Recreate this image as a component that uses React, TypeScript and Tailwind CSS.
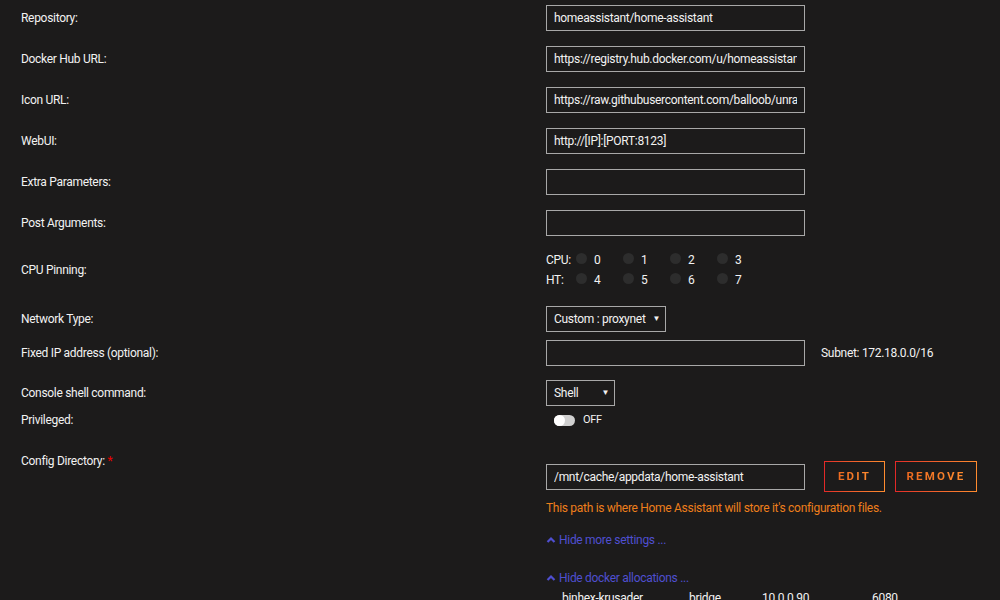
import React from "react";

const font = { fontFamily: "Roboto, 'Liberation Sans', sans-serif" };

function Label({ children }: { children: React.ReactNode }) {
  return <div className="w-[546px] shrink-0 pl-[21px] text-[12px] text-[#f2f2f2]">{children}</div>;
}

function TextInput({ value, w = "w-[259px]" }: { value?: string; w?: string }) {
  return (
    <div className={`${w} h-[26px] border border-[#a8a8a8] px-[7px] flex items-center text-[12px] text-[#f2f2f2]`}>
      <div className="w-full overflow-hidden whitespace-nowrap">{value}</div>
    </div>
  );
}

function Select({ value, w }: { value: string; w: string }) {
  return (
    <div className={`${w} h-[26px] border border-[#a8a8a8] pl-[7px] pr-[5px] flex items-center justify-between text-[12px] text-[#f2f2f2]`}>
      <span>{value}</span>
      <span className="text-[8px] leading-none">▼</span>
    </div>
  );
}

function Radio({ n }: { n: number }) {
  return (
    <div className="w-[47px] flex items-center">
      <div className="w-[11px] h-[11px] rounded-full bg-[#2d2d2d] -mt-[4px]" />
      <span className="ml-[7px]">{n}</span>
    </div>
  );
}

function Chevron() {
  return (
    <svg width="10" height="8" viewBox="0 0 10 8" className="mr-[3px]">
      <polyline points="1.5,6 5,2.5 8.5,6" fill="none" stroke="#4f4fd0" strokeWidth="2.2" />
    </svg>
  );
}

function GradButton({ label, w }: { label: string; w: string }) {
  return (
    <div className={`${w} h-[31px] p-[1px] bg-gradient-to-r from-[#e22828] to-[#ff8c2f]`}>
      <div className="w-full h-full bg-[#1c1b1b] flex items-center justify-center">
        <span className="text-[11.5px] font-bold tracking-[2.2px] bg-gradient-to-r from-[#ee6a20] to-[#ff8c2f] bg-clip-text text-transparent">
          {label}
        </span>
      </div>
    </div>
  );
}

export default function App() {
  const rows: [string, string][] = [
    ["Repository:", "homeassistant/home-assistant"],
    ["Docker Hub URL:", "https://registry.hub.docker.com/u/homeassistant/home-assistant/"],
    ["Icon URL:", "https://raw.githubusercontent.com/balloob/unraid-docker-templates/master/"],
    ["WebUI:", "http://[IP]:[PORT:8123]"],
    ["Extra Parameters:", ""],
    ["Post Arguments:", ""],
  ];
  return (
    <div className="w-[1000px] h-[600px] overflow-hidden bg-[#1c1b1b] text-[#f2f2f2] text-[12px] tracking-[-0.3px]" style={font}>
      <div className="pt-[5px] flex flex-col">
        {rows.map(([l, v]) => (
          <div key={l} className="flex items-center h-[26px] mb-[15px]">
            <Label>{l}</Label>
            <TextInput value={v} />
          </div>
        ))}
        {/* CPU pinning */}
        <div className="flex items-center h-[40px] -mt-[1px]">
          <Label>CPU Pinning:</Label>
          <div className="flex flex-col">
            <div className="flex items-center h-[20px]">
              <span className="w-[30px]">CPU:</span>
              {[0, 1, 2, 3].map((n) => <Radio key={n} n={n} />)}
            </div>
            <div className="flex items-center h-[20px]">
              <span className="w-[30px]">HT:</span>
              {[4, 5, 6, 7].map((n) => <Radio key={n} n={n} />)}
            </div>
          </div>
        </div>
        <div className="flex items-center h-[26px] mt-[16px]">
          <Label>Network Type:</Label>
          <Select value="Custom : proxynet" w="w-[120px]" />
        </div>
        <div className="flex items-center h-[26px] mt-[8px]">
          <Label>Fixed IP address (optional):</Label>
          <TextInput />
          <span className="ml-[16px]">Subnet: 172.18.0.0/16</span>
        </div>
        <div className="flex items-center h-[26px] mt-[14px]">
          <Label>Console shell command:</Label>
          <Select value="Shell" w="w-[69px]" />
        </div>
        <div className="flex items-center h-[28px]">
          <Label>Privileged:</Label>
          <div className="ml-[8px] flex items-center">
            <div className="w-[21px] h-[11px] rounded-full bg-[#d0d0d0] flex items-center">
              <div className="w-[11px] h-[11px] rounded-full bg-white" />
            </div>
            <span className="ml-[8px] text-[11px]">OFF</span>
          </div>
        </div>
        {/* Config directory */}
        <div className="flex mt-[19px]">
          <div className="w-[546px] shrink-0 pl-[21px] text-[12px] leading-[16px]">
            Config Directory: <span className="text-[#e00]">*</span>
          </div>
          <div className="flex flex-col pt-[8px]">
            <div className="flex items-center h-[31px]">
              <TextInput value="/mnt/cache/appdata/home-assistant" />
              <div className="ml-[19px]">
                <GradButton label="EDIT" w="w-[61px]" />
              </div>
              <div className="ml-[10px]">
                <GradButton label="REMOVE" w="w-[82px]" />
              </div>
            </div>
            <div className="mt-[8px] leading-[16px] text-[#ee7f1b]">
              This path is where Home Assistant will store it's configuration files.
            </div>
            <div className="mt-[16px] leading-[16px] text-[#4f4fd0] flex items-center">
              <Chevron />
              Hide more settings ...
            </div>
            <div className="mt-[22px] leading-[16px] text-[#4f4fd0] flex items-center">
              <Chevron />
              Hide docker allocations ...
            </div>
            <div className="mt-[4px] leading-[16px] flex text-[#f2f2f2]">
              <span className="ml-[16px] w-[127px]">binhex-krusader</span>
              <span className="w-[73px]">bridge</span>
              <span className="w-[110px]">10.0.0.90</span>
              <span>6080</span>
            </div>
          </div>
        </div>
      </div>
    </div>
  );
}
